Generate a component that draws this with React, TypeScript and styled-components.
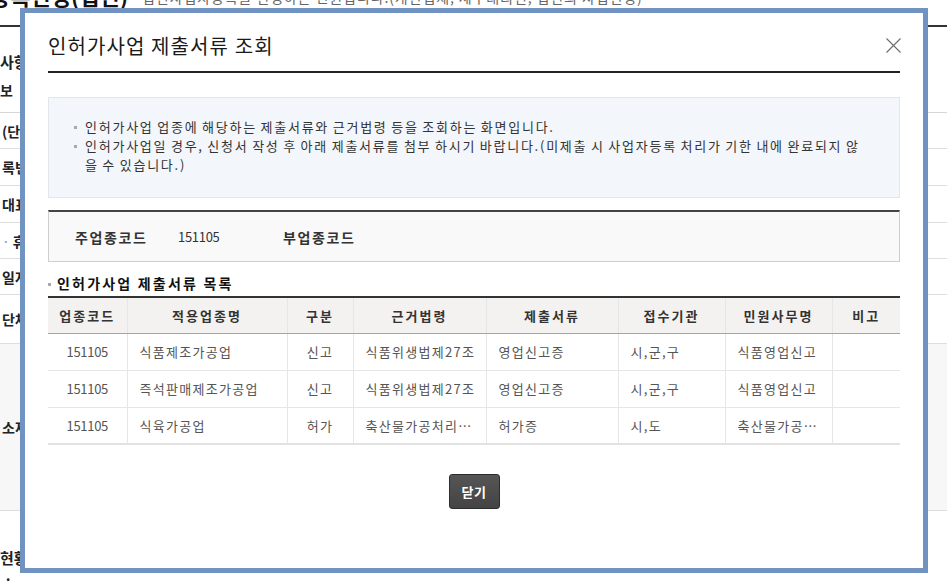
import React from "react";
import styled, { createGlobalStyle } from "styled-components";

const GlobalStyle = createGlobalStyle`
  html, body { margin: 0; padding: 0; background: #fff; overflow: hidden; }
  body { font-family: "Noto Sans CJK KR", "Noto Sans", sans-serif; color: #222; }
  * { box-sizing: border-box; }
`;

/* ---------- background page ---------- */
const Page = styled.div`
  width: 947px;
  height: 586px;
  overflow: hidden;
`;

const PageHeader = styled.header`
  margin-top: -20px;
  height: 47px;
  border-bottom: 2px solid #333;
  display: flex;
  align-items: flex-start;
  gap: 14px;
`;

const PageTitle = styled.h1`
  margin: 0 0 0 -10px;
  font-size: 22px;
  line-height: 30px;
  font-weight: 700;
  color: #111;
  white-space: nowrap;
`;

const PageDesc = styled.span`
  font-size: 14px;
  line-height: 30px;
  letter-spacing: 0.9px;
  color: #666;
  padding-top: 2px;
  white-space: nowrap;
`;

const SectionHead = styled.h2<{ $mt: number }>`
  margin: ${(p) => p.$mt}px 0 0 0;
  font-size: 15px;
  line-height: 22px;
  font-weight: 700;
  color: #222;
`;

const SubHead = styled.h3`
  margin: 7px 0 0 0;
  font-size: 14px;
  line-height: 20px;
  font-weight: 700;
  color: #222;
`;

const FormTable = styled.div`
  margin-top: 12px;
  border-top: 1px solid #d6d6d6;
`;

const FormRow = styled.div<{ $h: number; $shade?: boolean }>`
  height: ${(p) => p.$h}px;
  border-bottom: 1px solid #dedede;
  display: flex;
  align-items: center;
  background: ${(p) => (p.$shade ? "#f7f7f7" : "#fff")};
`;

const FormLabel = styled.span`
  padding-left: 2px;
  font-size: 14px;
  font-weight: 700;
  color: #222;
`;

const Mark = styled.span`
  color: #999;
  font-weight: 400;
  margin-right: 3px;
`;

const Bullet = styled.div`
  margin: 2px 0 0 4px;
  font-size: 14px;
  line-height: 16px;
  font-weight: 700;
`;

/* ---------- modal ---------- */
const Modal = styled.div`
  position: fixed;
  left: 20px;
  top: 8px;
  width: 908px;
  height: 565px;
  border: 5px solid #7193c1;
  background: #fff;
  padding: 0 23px;
  display: flex;
  flex-direction: column;
`;

const ModalHeader = styled.div`
  height: 60px;
  padding-top: 6px;
  border-bottom: 2px solid #222;
  display: flex;
  align-items: center;
  justify-content: space-between;
`;

const ModalTitle = styled.h2`
  margin: 0;
  font-size: 20px;
  font-weight: 400;
  color: #1a1a1a;
  letter-spacing: 1.1px;
`;

const CloseButton = styled.button`
  width: 16px;
  height: 16px;
  padding: 0;
  border: 0;
  background: none;
  margin-right: -1px;
  display: flex;
  align-items: center;
  justify-content: center;
  cursor: pointer;
`;

const InfoBox = styled.div`
  margin-top: 24px;
  background: #f3f6fa;
  border: 1px solid #e0e6ee;
  padding: 19px 25px 23px 25px;
`;

const InfoList = styled.ul`
  margin: 0;
  padding: 0;
  list-style: none;
`;

const InfoItem = styled.li`
  display: flex;
  font-size: 13px;
  line-height: 19px;
  color: #333;
  letter-spacing: 1.75px;
  word-spacing: -1px;
`;

const SmallDot = styled.span`
  flex: 0 0 11px;
  position: relative;
  &::before {
    content: "";
    position: absolute;
    left: 0;
    top: 9px;
    width: 3px;
    height: 3px;
    background: #a9a9a9;
  }
`;

const CodeBox = styled.div`
  margin-top: 12px;
  height: 52px;
  background: #f9f9f9;
  border: 1px solid #cfcfcf;
  border-top: 2px solid #444;
  display: flex;
  align-items: center;
  padding-left: 26px;
  font-size: 13px;
  color: #333;
`;

const CodeLabel = styled.span<{ $w: number }>`
  font-size: 14px;
  font-weight: 700;
  letter-spacing: 1.6px;
  width: ${(p) => p.$w}px;
  color: #333;
`;

const CodeValue = styled.span`
  width: 105px;
  letter-spacing: -0.3px;
  color: #333;
`;

const ListTitle = styled.h3`
  margin: 10px 0 0 0;
  height: 22px;
  display: flex;
  align-items: center;
  font-size: 14px;
  font-weight: 700;
  letter-spacing: 2.2px;
  color: #111;
`;

const TitleDot = styled.span`
  width: 9px;
  height: 22px;
  position: relative;
  &::before {
    content: "";
    position: absolute;
    left: 0;
    top: 11px;
    width: 3px;
    height: 3px;
    background: #a9a9a9;
  }
`;

const Table = styled.table`
  margin-top: 2px;
  width: 852px;
  table-layout: fixed;
  border-collapse: collapse;
  border-top: 2px solid #333;
  border-bottom: 2px solid #e2e2e2;
  font-size: 13px;
`;

const Th = styled.th`
  height: 36px;
  background: #f3f2f0;
  border-bottom: 1px solid #a5a5a5;
  border-left: 1px solid #e6e6e6;
  &:first-child { border-left: 0; }
  font-weight: 700;
  color: #333;
  letter-spacing: 2px;
  text-align: center;
  padding: 0;
`;

const Td = styled.td<{ $align?: "center" | "left"; $num?: boolean }>`
  height: 37px;
  border-bottom: 1px solid #e6e6e6;
  border-left: 1px solid #e6e6e6;
  &:first-child { border-left: 0; }
  color: #555;
  text-align: ${(p) => p.$align ?? "left"};
  padding: ${(p) => (p.$align === "center" ? "0" : "0 8px 0 12px")};
  letter-spacing: ${(p) => (p.$num ? "-0.3px" : "1.3px")};
  white-space: nowrap;
  overflow: hidden;
  text-overflow: ellipsis;
`;

const Footer = styled.div`
  margin-top: 29px;
  display: flex;
  justify-content: center;
`;

const DarkButton = styled.button`
  width: 51px;
  height: 35px;
  border: 1px solid #2e2e2e;
  border-radius: 3px;
  background: linear-gradient(#555, #444);
  color: #fff;
  font-family: inherit;
  font-size: 13px;
  font-weight: 700;
  letter-spacing: 0.5px;
  padding: 0;
  cursor: pointer;
`;

const cols = [79, 160, 66, 133, 132, 107, 107, 68];
const heads = ["업종코드", "적용업종명", "구분", "근거법령", "제출서류", "접수기관", "민원사무명", "비고"];
const rows = [
  ["151105", "식품제조가공업", "신고", "식품위생법제27조", "영업신고증", "시,군,구", "식품영업신고", ""],
  ["151105", "즉석판매제조가공업", "신고", "식품위생법제27조", "영업신고증", "시,군,구", "식품영업신고", ""],
  ["151105", "식육가공업", "허가", "축산물가공처리…", "허가증", "시,도", "축산물가공…", ""],
];

export default function App() {
  return (
    <>
      <GlobalStyle />
      <Page>
        <PageHeader>
          <PageTitle>등록신청(법인)</PageTitle>
          <PageDesc>법인사업자등록을 신청하는 민원입니다.(개인업체, 세무대리인, 법인의 사업신청)</PageDesc>
        </PageHeader>
        <SectionHead $mt={24}>사항</SectionHead>
        <SubHead>보</SubHead>
        <FormTable>
          <FormRow $h={36}><FormLabel>(단체)명</FormLabel></FormRow>
          <FormRow $h={37}><FormLabel>록번호</FormLabel></FormRow>
          <FormRow $h={37}><FormLabel>대표자</FormLabel></FormRow>
          <FormRow $h={36}><FormLabel><Mark>·</Mark>휴대전화</FormLabel></FormRow>
          <FormRow $h={36}><FormLabel>일자</FormLabel></FormRow>
          <FormRow $h={49}><FormLabel>단체명</FormLabel></FormRow>
          <FormRow $h={167} $shade><FormLabel>소재지</FormLabel></FormRow>
        </FormTable>
        <SectionHead $mt={36}>현황</SectionHead>
        <Bullet>·</Bullet>
      </Page>

      <Modal role="dialog" aria-label="인허가사업 제출서류 조회">
        <ModalHeader>
          <ModalTitle>인허가사업 제출서류 조회</ModalTitle>
          <CloseButton aria-label="닫기">
            <svg width="15" height="15" viewBox="0 0 15 15">
              <path d="M0.5 0.5 L14.5 14.5 M14.5 0.5 L0.5 14.5" stroke="#6b6b6b" strokeWidth="1.1" fill="none" />
            </svg>
          </CloseButton>
        </ModalHeader>

        <InfoBox>
          <InfoList>
            <InfoItem>
              <SmallDot />
              <span>인허가사업 업종에 해당하는 제출서류와 근거법령 등을 조회하는 화면입니다.</span>
            </InfoItem>
            <InfoItem>
              <SmallDot />
              <span>
                인허가사업일 경우, 신청서 작성 후 아래 제출서류를 첨부 하시기 바랍니다.(미제출 시 사업자등록 처리가 기한 내에 완료되지 않
                <br />을 수 있습니다.)
              </span>
            </InfoItem>
          </InfoList>
        </InfoBox>

        <CodeBox>
          <CodeLabel $w={103}>주업종코드</CodeLabel>
          <CodeValue>151105</CodeValue>
          <CodeLabel $w={100}>부업종코드</CodeLabel>
        </CodeBox>

        <ListTitle>
          <TitleDot />
          인허가사업 제출서류 목록
        </ListTitle>

        <Table>
          <colgroup>
            {cols.map((w, i) => (
              <col key={i} style={{ width: w }} />
            ))}
          </colgroup>
          <thead>
            <tr>
              {heads.map((h) => (
                <Th key={h}>{h}</Th>
              ))}
            </tr>
          </thead>
          <tbody>
            {rows.map((r, ri) => (
              <tr key={ri}>
                {r.map((c, ci) => (
                  <Td key={ci} $align={ci === 0 || ci === 2 ? "center" : "left"} $num={ci === 0}>
                    {c}
                  </Td>
                ))}
              </tr>
            ))}
          </tbody>
        </Table>

        <Footer>
          <DarkButton>닫기</DarkButton>
        </Footer>
      </Modal>
    </>
  );
}
